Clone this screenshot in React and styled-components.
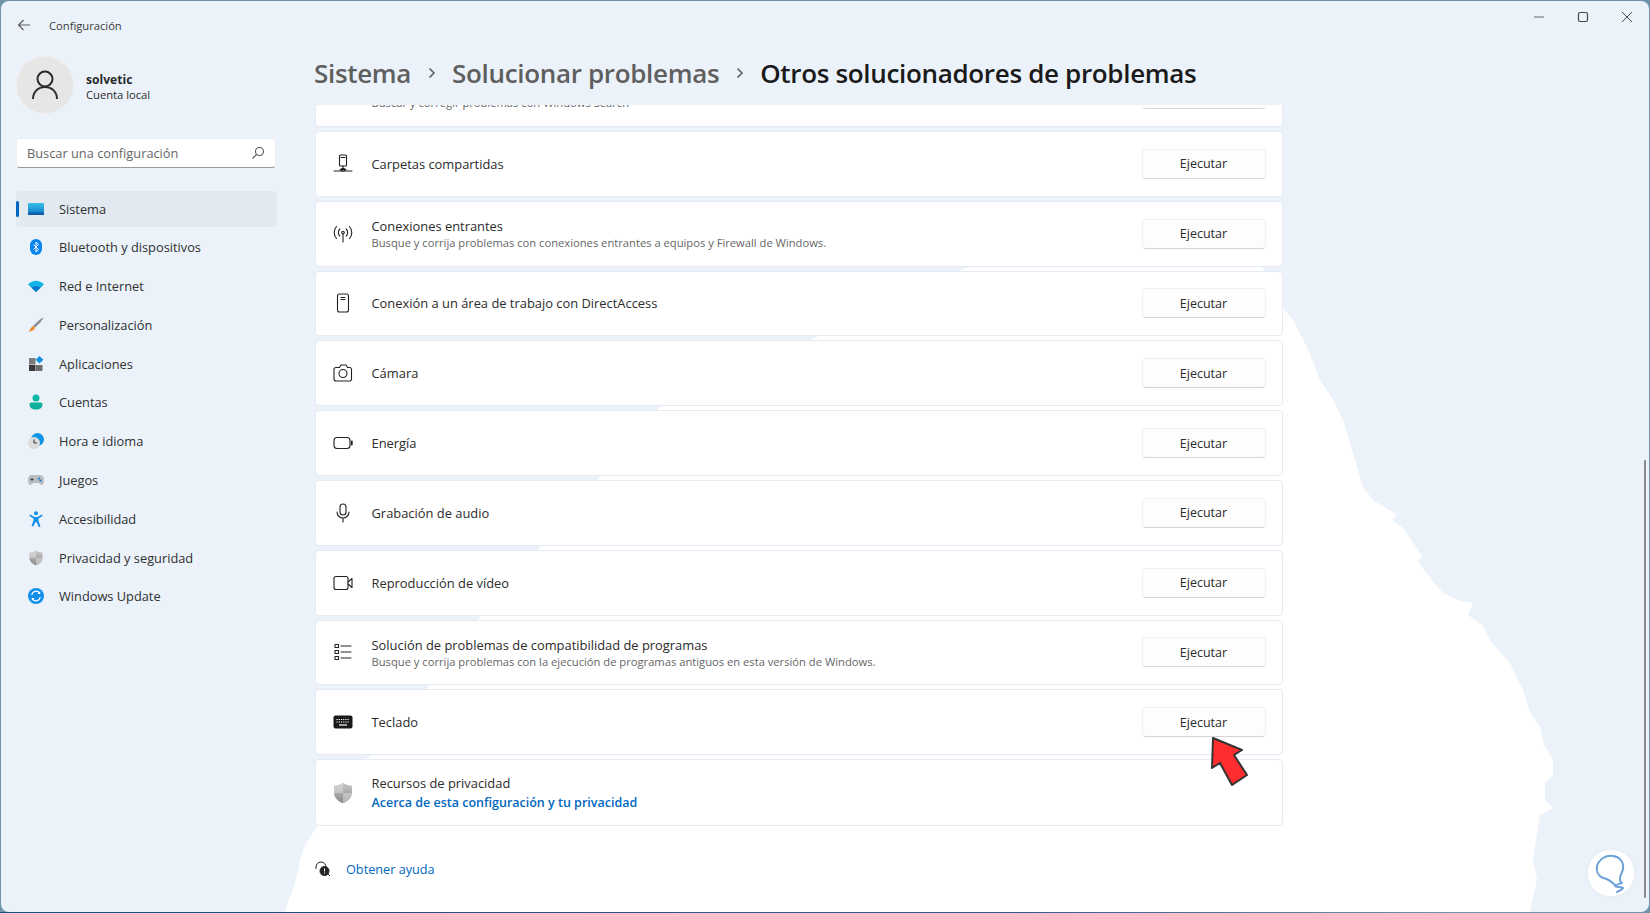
import React from "react";
import styled, { createGlobalStyle } from "styled-components";

const Global = createGlobalStyle`
  html, body { margin: 0; padding: 0; background: #6f93a8; }
  body { font-family: "Open Sans", "Noto Sans", sans-serif; color: #1f1f1f; overflow: hidden; }
  * { box-sizing: border-box; }
`;

const Page = styled.div`
  width: 1650px;
  height: 913px;
  padding: 1px;
  background: linear-gradient(90deg, #1d4f8a 0%, #33568c 60%, #6f93a8 88%) bottom / 100% 1px no-repeat, #6f93a8;
`;

const Window = styled.div`
  position: relative;
  width: 100%;
  height: 100%;
  display: flex;
  background: #ebf2f9;
  border-radius: 8px;
  overflow: hidden;
`;

const Blob = styled.svg`
  position: absolute;
  left: -1px;
  top: -1px;
  width: 1650px;
  height: 913px;
`;

const Sidebar = styled.aside`
  position: relative;
  width: 299px;
  flex: none;
  padding: 0 23px 0 15px;
`;

const TitleRow = styled.div`
  display: flex;
  align-items: center;
  height: 48px;
  gap: 17px;
  font-size: 11.2px;
  color: #3a3a3a;
`;

const Profile = styled.div`
  display: flex;
  align-items: center;
  gap: 12px;
  height: 58px;
  margin-top: 7px;
`;

const Avatar = styled.div`
  width: 58px;
  height: 58px;
  border-radius: 50%;
  background: #e6e6e6;
  border: 1px dotted #f7f7f7;
  display: flex;
  align-items: center;
  justify-content: center;
`;

const ProfileInfo = styled.div`
  padding-top: 4px;
`;

const ProfileName = styled.div`
  font-size: 12.1px;
  font-weight: 700;
  color: #2a2a2a;
  line-height: 15px;
`;

const ProfileSub = styled.div`
  font-size: 11.2px;
  color: #2a2a2a;
  line-height: 15px;
`;

const Search = styled.div`
  display: flex;
  align-items: center;
  justify-content: space-between;
  height: 30px;
  margin: 24px 0 22.5px;
  width: 260px;
  padding: 0 10px;
  background: #fff;
  border: 1px solid #edf0f2;
  border-bottom: 1px solid #9a9a9a;
  border-radius: 4px;
  font-size: 12.8px;
  color: #666;
`;

const Nav = styled.nav`
  display: flex;
  flex-direction: column;
  gap: 2.8px;
  width: 261px;
`;

const NavItem = styled.div`
  position: relative;
  display: flex;
  align-items: center;
  gap: 15px;
  height: 36px;
  padding-left: 12px;
  border-radius: 4px;
  font-size: 12.8px;
  color: #303030;
  background: ${(p) => (p.$active ? "#e3e9f0" : "transparent")};
`;

const NavMark = styled.span`
  position: absolute;
  left: 0;
  top: 10px;
  width: 3px;
  height: 16px;
  border-radius: 2px;
  background: #0067c0;
`;

const Main = styled.main`
  position: relative;
  flex: 1;
  min-width: 0;
  display: flex;
  flex-direction: column;
`;

const Controls = styled.div`
  display: flex;
  justify-content: flex-end;
  align-items: center;
  height: 31px;
  padding-right: 16px;
  gap: 32px;
`;

const Crumbs = styled.div`
  display: flex;
  align-items: center;
  height: 73px;
  padding: 8px 0 0 14px;
  font-size: 26px;
  font-weight: 600;
  color: #5f5f5f;
  flex: none;
`;

const Crumb = styled.span`
  color: ${(p) => (p.$current ? "#1a1a1a" : "#5f5f5f")};
  letter-spacing: -0.33px;
  white-space: nowrap;
`;

const CrumbSep = styled.span`
  display: flex;
  width: 41px;
  justify-content: center;
`;

const Content = styled.div`
  flex: 1;
  overflow: hidden;
  padding: 0 15px;
`;

const List = styled.div`
  width: 968px;
  margin-top: -43.8px;
  display: flex;
  flex-direction: column;
  gap: 4px;
`;

const Card = styled.div`
  display: flex;
  align-items: center;
  height: ${(p) => (p.$tall ? "67px" : "65.8px")};
  padding: 0 16.5px 0 16px;
  background: #fff;
  border: 1px solid #e5ebf2;
  border-radius: 4px;
`;

const IconBox = styled.div`
  width: 22px;
  flex: none;
  display: flex;
  justify-content: center;
  margin-right: 17.5px;
  color: #1f1f1f;
`;

const CardText = styled.div`
  flex: 1;
  min-width: 0;
  padding-top: ${(p) => p.$pad || 1}px;
`;

const CardTitle = styled.div`
  font-size: 12.9px;
  line-height: 17px;
  color: #2b2b2b;
`;

const CardSub = styled.div`
  font-size: 11.2px;
  line-height: 15px;
  color: #666;
`;

const RunButton = styled.button`
  width: 124px;
  height: 30px;
  flex: none;
  font: inherit;
  font-size: 12.5px;
  color: #2b2b2b;
  background: #fdfdfd;
  border: 1px solid #f0f0f0;
  border-bottom-color: #d4d4d4;
  border-radius: 4px;
`;

const PrivacyLink = styled.a`
  display: block;
  margin-top: 2px;
  font-size: 12.5px;
  line-height: 18px;
  font-weight: 600;
  color: #0067c0;
`;

const Help = styled.div`
  display: flex;
  align-items: center;
  gap: 15px;
  margin-top: 31px;
  height: 24px;
  font-size: 12.7px;
  font-weight: 500;
  color: #0067c0;
`;

const Pointer = styled.svg`
  position: absolute;
  left: 909px;
  top: 734px;
`;

const Scrollbar = styled.div`
  position: absolute;
  right: 3px;
  top: 459px;
  width: 2px;
  height: 438px;
  border-radius: 1px;
  background: #8a8a8a;
`;

const Logo = styled.svg`
  position: absolute;
  right: 13px;
  bottom: 14px;
`;

const Line = ({ children, size = 20 }) => (
  <svg width={size} height={size} viewBox="0 0 20 20" fill="none" stroke="#222" strokeWidth="1.1" strokeLinecap="round" strokeLinejoin="round">
    {children}
  </svg>
);

const ColorIcon = ({ children, w = 16, h = 16 }) => (
  <svg width={w} height={h} viewBox="0 0 16 16" style={{ flex: "none" }}>{children}</svg>
);

const ShieldShape = () => (
  <>
    <defs>
      <linearGradient id="sh" x1="0" y1="0" x2="0" y2="1">
        <stop offset="0" stopColor="#c8c8c8" />
        <stop offset="1" stopColor="#8a8a8a" />
      </linearGradient>
    </defs>
    <path d="M8 .5c2 1.4 4 2 6.5 2.1V8c0 3.4-2.6 5.9-6.5 7.5C4.100 13.900 1.500 11.400 1.500 8V2.600C4 2.500 6 1.900 8 .5z" fill="url(#sh)" />
    <path d="M8 .5V8H1.500V2.600C4 2.500 6 1.900 8 .5zM8 8h6.500c0 3.400-2.600 5.900-6.500 7.500z" fill="#dcdcdc" opacity=".55" />
  </>
);

const navIcons = {
  sistema: (
    <ColorIcon>
      <defs>
        <linearGradient id="sys" x1="0" y1="0" x2="0" y2="1">
          <stop offset="0" stopColor="#35c0ea" />
          <stop offset="1" stopColor="#0c74c4" />
        </linearGradient>
      </defs>
      <rect x="0" y="2" width="16" height="12" rx="1" fill="url(#sys)" />
      <rect x="0" y="11.500" width="16" height="2.500" fill="#0f5fa8" />
    </ColorIcon>
  ),
  bluetooth: (
    <ColorIcon>
      <rect x="2" y="0" width="12" height="16" rx="6" fill="#0a84f0" />
      <path d="M5.500 5.500l5 5L8 13V3l2.500 2.500-5 5" fill="none" stroke="#fff" strokeWidth="1" />
    </ColorIcon>
  ),
  red: (
    <ColorIcon>
      <path d="M0 6.500C4.500 1.500 11.500 1.500 16 6.500L8 14z" fill="#12b5ea" />
      <path d="M3.500 9.800C6 7.300 10 7.300 12.500 9.800L8 14z" fill="#0a76c8" />
    </ColorIcon>
  ),
  personal: (
    <ColorIcon>
      <path d="M15.500 .5c.3 1-4.500 7-8.500 10L5.200 8.700C8.500 5 14.500 .2 15.500 .5z" fill="#8f9398" />
      <path d="M5 9c1 .3 1.800 1.100 2 2-1 2.500-4 3.800-6.500 3.500C2.500 13 2.500 10.500 5 9z" fill="#f08a24" />
    </ColorIcon>
  ),
  apps: (
    <ColorIcon>
      <rect x="1" y="2" width="6.500" height="6.500" fill="#7c7c7c" />
      <rect x="1" y="9" width="6.500" height="6" fill="#3b3b3b" />
      <rect x="8" y="9" width="6.500" height="6" fill="#6e6e6e" />
      <path d="M11.500 0l3.800 3.800-3.800 3.800-3.800-3.800z" fill="#0f8fe8" />
    </ColorIcon>
  ),
  cuentas: (
    <ColorIcon>
      <circle cx="8" cy="4" r="3.500" fill="#11b8a8" />
      <path d="M1.500 10.500c0-1.500 1-2 2.500-2h8c1.500 0 2.500.5 2.500 2 0 3-2.500 5-6.500 5s-6.500-2-6.500-5z" fill="#0fb09e" />
    </ColorIcon>
  ),
  hora: (
    <ColorIcon>
      <circle cx="9.500" cy="6.500" r="6.500" fill="#0f95e4" />
      <circle cx="6" cy="10" r="6" fill="#dcdcdc" />
      <path d="M6 6.500V10h3" fill="none" stroke="#333" strokeWidth="1" />
    </ColorIcon>
  ),
  juegos: (
    <ColorIcon>
      <path d="M4 3h8c2.500 0 4 2 4 5s-1 5-2.500 5c-1.200 0-2-2-3-2h-5c-1 0-1.800 2-3 2C1 13 0 11 0 8s1.500-5 4-5z" fill="#b9bcc0" />
      <path d="M2.500 7.500h3M4 6v3" stroke="#333" strokeWidth=".9" />
      <circle cx="11" cy="6.500" r="1" fill="#1277d6" />
      <circle cx="12.500" cy="8.500" r="1" fill="#1277d6" />
    </ColorIcon>
  ),
  acceso: (
    <ColorIcon>
      <circle cx="8" cy="2.200" r="2" fill="#0f8fe8" />
      <path d="M2 3.500l4.500 2.500h3L14 3.500l.8 1.300-4.300 2.700v2.500l2 5.500-1.700.5L8.500 11h-1l-2.300 4.500-1.700-.5 2-5.500V7.500L1.200 4.800z" fill="#0f8fe8" />
    </ColorIcon>
  ),
  privacidad: (
    <ColorIcon><ShieldShape /></ColorIcon>
  ),
  update: (
    <ColorIcon>
      <circle cx="8" cy="8" r="8" fill="#0f8fe8" />
      <path d="M3.800 7a4.300 4.300 0 0 1 7.400-2.400M12.200 9a4.300 4.300 0 0 1-7.400 2.400" fill="none" stroke="#fff" strokeWidth="1.300" />
      <path d="M12.200 3v3h-3zM3.800 13v-3h3z" fill="#fff" />
    </ColorIcon>
  ),
};

const navItems = [
  ["sistema", "Sistema"],
  ["bluetooth", "Bluetooth y dispositivos"],
  ["red", "Red e Internet"],
  ["personal", "Personalización"],
  ["apps", "Aplicaciones"],
  ["cuentas", "Cuentas"],
  ["hora", "Hora e idioma"],
  ["juegos", "Juegos"],
  ["acceso", "Accesibilidad"],
  ["privacidad", "Privacidad y seguridad"],
  ["update", "Windows Update"],
];

const rowIcons = {
  carpetas: (
    <Line>
      <rect x="6.500" y="1" width="7" height="11" rx="1" />
      <path d="M8 3.500h4M10 12v3M7 15.500h6M1 17h18" />
      <rect x="8" y="14.500" width="4" height="2.500" rx="1" />
    </Line>
  ),
  conexiones: (
    <Line>
      <circle cx="10" cy="8.500" r="1.300" />
      <path d="M10 10v8M6.800 12a5 5 0 0 1 0-7M13.200 5a5 5 0 0 1 0 7M3.500 14.500a9 9 0 0 1 0-12M16.500 2.500a9 9 0 0 1 0 12" />
    </Line>
  ),
  directa: (
    <Line>
      <rect x="4.500" y="1" width="11" height="18" rx="2" />
      <path d="M8 4.500h4M8 6.500h4" />
    </Line>
  ),
  camara: (
    <Line>
      <path d="M3 4.500h3.500l1.500-2.500h5l1.500 2.500H17a2 2 0 0 1 1.500 1.500v10a2 2 0 0 1-1.500 2H3a2 2 0 0 1-2-2V6a2 2 0 0 1 2-1.500z" />
      <circle cx="10" cy="10.500" r="4" />
    </Line>
  ),
  energia: (
    <Line>
      <rect x="1" y="4.500" width="16" height="11" rx="3" />
      <path d="M18.800 8.500v3" strokeWidth="1.800" />
    </Line>
  ),
  audio: (
    <Line>
      <rect x="7" y="1" width="6" height="11" rx="3" />
      <path d="M4 9a6 6 0 0 0 12 0M10 15v4" />
    </Line>
  ),
  video: (
    <Line>
      <rect x="1" y="3.500" width="14" height="13" rx="2" />
      <path d="M15 9l4-3.500v9L15 11" />
    </Line>
  ),
  compat: (
    <Line>
      <rect x="2" y="2.500" width="3.500" height="3" />
      <rect x="2" y="8.500" width="3.500" height="3" />
      <rect x="2" y="14.500" width="3.500" height="3" />
      <path d="M8 4h10M8 10h10M8 16h10" />
    </Line>
  ),
  teclado: (
    <svg width="20" height="20" viewBox="0 0 20 20">
      <rect x="0.500" y="3.500" width="19" height="13" rx="2" fill="#1a1a1a" />
      <path d="M3.500 7.500h13M3.500 10h13" stroke="#fff" strokeWidth="1.200" strokeDasharray="1.200 1" />
      <path d="M6 13h8" stroke="#fff" strokeWidth="1.200" />
    </svg>
  ),
};

const rows = [
  { icon: "carpetas", title: "Carpetas compartidas" },
  { icon: "conexiones", title: "Conexiones entrantes", sub: "Busque y corrija problemas con conexiones entrantes a equipos y Firewall de Windows." },
  { icon: "directa", title: "Conexión a un área de trabajo con DirectAccess" },
  { icon: "camara", title: "Cámara" },
  { icon: "energia", title: "Energía" },
  { icon: "audio", title: "Grabación de audio" },
  { icon: "video", title: "Reproducción de vídeo" },
  { icon: "compat", title: "Solución de problemas de compatibilidad de programas", sub: "Busque y corrija problemas con la ejecución de programas antiguos en esta versión de Windows." },
  { icon: "teclado", title: "Teclado" },
];

const blobPoints =
  "970,266 1262,266 1272,290 1283,308 1293,320 1307,347 1320,380 1332,398 1343,420 1353,453 1363,487 1373,500 1397,515 1392,520 1403,528 1423,557 1417,560 1430,578 1443,593 1458,600 1473,603 1468,615 1482,625 1490,640 1510,663 1523,690 1530,712 1540,727 1544,745 1553,760 1553,775 1545,783 1545,800 1553,808 1540,815 1537,833 1533,860 1537,880 1533,897 1530,913 285,913 287,905 296,880 300,860 305,845 318,825 316,775 370,757 428,687 480,617 540,547 600,477 660,407 817,337";

export default function App() {
  return (
    <Page>
      <Global />
      <Window>
        <Blob viewBox="0 0 1650 913">
          <polygon points={blobPoints} fill="#fff" />
        </Blob>
        <Sidebar>
          <TitleRow>
            <svg width="16" height="16" viewBox="0 0 16 16" fill="none" stroke="#5c5c5c" strokeWidth="1.100">
              <path d="M14 8H2.500M7.500 3l-5 5 5 5" />
            </svg>
            Configuración
          </TitleRow>
          <Profile>
            <Avatar>
              <svg width="28" height="30" viewBox="0 0 28 30" fill="none" stroke="#2b2b2b" strokeWidth="2">
                <circle cx="14" cy="9" r="7.500" />
                <path d="M2 29c0-7 5-12 12-12s12 5 12 12" />
              </svg>
            </Avatar>
            <ProfileInfo>
              <ProfileName>solvetic</ProfileName>
              <ProfileSub>Cuenta local</ProfileSub>
            </ProfileInfo>
          </Profile>
          <Search>
            Buscar una configuración
            <svg width="14" height="14" viewBox="0 0 14 14" fill="none" stroke="#555" strokeWidth="1.100">
              <circle cx="8.500" cy="5.500" r="4" />
              <path d="M5.500 8.500L1.500 12.500" />
            </svg>
          </Search>
          <Nav>
            {navItems.map(([key, label], i) => (
              <NavItem key={key} $active={i === 0}>
                {i === 0 && <NavMark />}
                {navIcons[key]}
                {label}
              </NavItem>
            ))}
          </Nav>
        </Sidebar>
        <Main>
          <Controls>
            <svg width="12" height="12" viewBox="0 0 12 12" stroke="#6a6a6a" strokeWidth="1.200"><path d="M1 6h10" /></svg>
            <svg width="12" height="12" viewBox="0 0 12 12" fill="none" stroke="#4a4a4a" strokeWidth="1.200"><rect x="1.500" y="1.500" width="9" height="9" rx="1.500" /></svg>
            <svg width="12" height="12" viewBox="0 0 12 12" stroke="#4a4a4a" strokeWidth="1"><path d="M1 1l10 10M11 1L1 11" /></svg>
          </Controls>
          <Crumbs>
            <Crumb>Sistema</Crumb>
            <CrumbSep>
              <svg width="10" height="14" viewBox="0 0 10 14" fill="none" stroke="#5f5f5f" strokeWidth="1.600"><path d="M2.500 2.500L7 7l-4.500 4.500" /></svg>
            </CrumbSep>
            <Crumb>Solucionar problemas</Crumb>
            <CrumbSep>
              <svg width="10" height="14" viewBox="0 0 10 14" fill="none" stroke="#5f5f5f" strokeWidth="1.600"><path d="M2.500 2.500L7 7l-4.500 4.500" /></svg>
            </CrumbSep>
            <Crumb $current>Otros solucionadores de problemas</Crumb>
          </Crumbs>
          <Content>
            <List>
              <Card>
                <IconBox />
                <CardText $pad={17}>
                  <CardSub>Buscar y corregir problemas con Windows Search</CardSub>
                </CardText>
                <RunButton>Ejecutar</RunButton>
              </Card>
              {rows.map((r) => (
                <Card key={r.icon}>
                  <IconBox>{rowIcons[r.icon]}</IconBox>
                  <CardText>
                    <CardTitle>{r.title}</CardTitle>
                    {r.sub && <CardSub>{r.sub}</CardSub>}
                  </CardText>
                  <RunButton>Ejecutar</RunButton>
                </Card>
              ))}
              <Card $tall>
                <IconBox>
                  <ColorIcon w={22} h={22}><ShieldShape /></ColorIcon>
                </IconBox>
                <CardText>
                  <CardTitle>Recursos de privacidad</CardTitle>
                  <PrivacyLink>Acerca de esta configuración y tu privacidad</PrivacyLink>
                </CardText>
              </Card>
            </List>
            <Help>
              <svg width="16" height="16" viewBox="0 0 16 16" fill="none" stroke="#222" strokeWidth="1">
                <path d="M1 8V6a5 5 0 0 1 10 0" />
                <circle cx="9.500" cy="10" r="4.500" fill="#222" />
                <path d="M13 13l2 2" />
                <path d="M9.500 7.500v3M9.500 11.500v1" stroke="#fff" />
              </svg>
              Obtener ayuda
            </Help>
          </Content>
          <Pointer width="44" height="54" viewBox="0 0 44 54">
            <path d="M4 3l29 12-8 5 13 20-15 10-12-22-8 5z" fill="#ff2d2d" stroke="#333" strokeWidth="2" strokeLinejoin="round" />
          </Pointer>
        </Main>
        <Scrollbar />
        <Logo width="50" height="50" viewBox="0 0 50 50">
          <circle cx="25" cy="25" r="24" fill="#fff" stroke="#e0e8f0" />
          <path d="M29 37c-2-2-6-6-12-7-5-2-7-7-6-12 2-7 9-11 16-10 7 1 11 6 10 13-1 4-3 6-3 10 0 2 1 4 2 4-3 1-7 2-7 3 0 1 8 1 8 2-1 2-4 3-6 4" fill="none" stroke="#6a9fd8" strokeWidth="2" strokeLinecap="round" strokeLinejoin="round" />
        </Logo>
      </Window>
    </Page>
  );
}
